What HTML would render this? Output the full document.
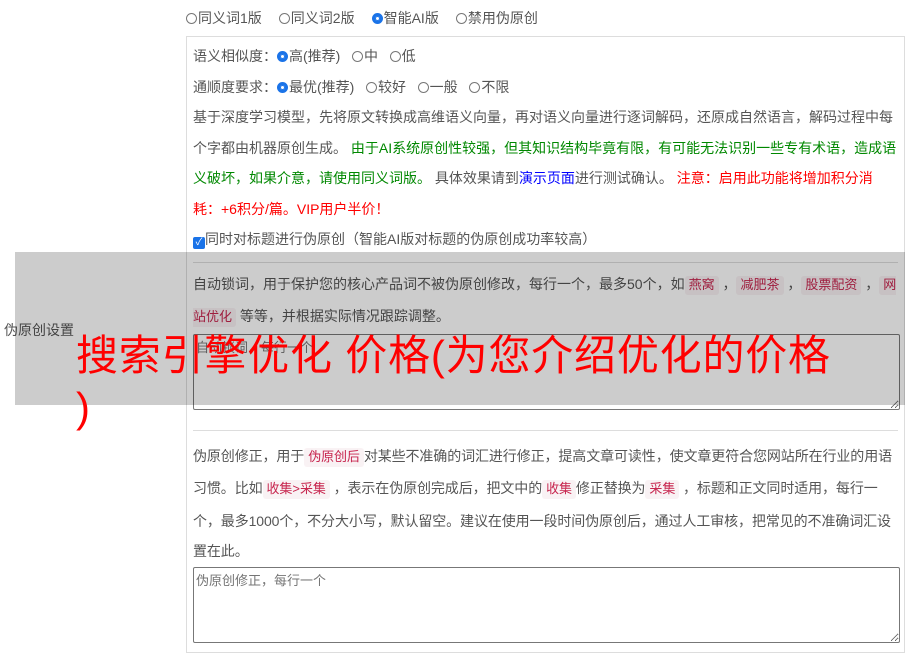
<!DOCTYPE html>
<html><head><meta charset="utf-8"><style>
body{margin:0;width:911px;height:658px;overflow:hidden;background:#fff;font-family:"Liberation Sans","Noto Sans CJK SC",sans-serif;font-size:14px;color:#555;position:relative}
.top{position:absolute;left:186px;top:8px;line-height:20px}
.top span.i{margin-right:17px}
.r{display:inline-block;width:11px;height:11px;border:1px solid #777;border-radius:50%;vertical-align:-1px;margin-right:1px;box-sizing:border-box}
.r.on{border:3px solid #1a73e8;background:#fff;box-shadow:0 0 0 1px #1a73e8 inset}
.box{position:absolute;left:186px;top:36px;width:719px;height:617px;border:1px solid #ddd;box-sizing:border-box;padding:4px 6px 0 6px}
p{margin:0;line-height:30.5px}
.bk{word-break:break-all}
.g{color:#080}.b{color:#00f}.red{color:#f00}
code{font-family:"Liberation Mono","Noto Sans CJK SC",monospace;font-size:13px;color:#c7254e;background:#f9f2f4;padding:2px 4px;border-radius:3px}
hr{border:0;border-top:1px solid #ddd;margin:7px 0 6px}
textarea{display:block;width:707px;height:76px;border:1px solid #777;border-radius:2px;box-sizing:border-box;font-family:inherit;font-size:13px;color:#777;padding:2px;resize:both;margin:0}
.lbl{position:absolute;left:4px;top:320px;color:#555}
.ov{position:absolute;left:15px;top:252px;width:890px;height:153px;background:rgba(0,0,0,.2)}
.t{position:absolute;left:76px;top:330px;width:800px;font-size:42px;letter-spacing:0.8px;line-height:52px;color:#f00}
.cb{display:inline-block;width:12px;height:12px;background:#1a73e8;border-radius:2px;color:#fff;font-size:10px;line-height:12px;text-align:center;vertical-align:-1px}
</style></head><body>
<div class="top"><span class="i"><span class="r"></span>同义词1版</span><span class="i"><span class="r"></span>同义词2版</span><span class="i"><span class="r on"></span>智能AI版</span><span><span class="r"></span>禁用伪原创</span></div>
<div class="box">
<p>语义相似度：<span class="r on"></span>高(推荐) &nbsp; <span class="r"></span>中 &nbsp; <span class="r"></span>低</p>
<p>通顺度要求：<span class="r on"></span>最优(推荐) &nbsp; <span class="r"></span>较好 &nbsp; <span class="r"></span>一般 &nbsp; <span class="r"></span>不限</p>
<p>基于深度学习模型，先将原文转换成高维语义向量，再对语义向量进行逐词解码，还原成自然语言，解码过程中每个字都由机器原创生成。 <span class="g">由于AI系统原创性较强，但其知识结构毕竟有限，有可能无法识别一些专有术语，造成语义破坏，如果介意，请使用同义词版。</span> 具体效果请到<span class="b">演示页面</span>进行测试确认。 <span class="red">注意：启用此功能将增加积分消耗：+6积分/篇。VIP用户半价！</span></p>
<p><span class="cb">✓</span>同时对标题进行伪原创（智能AI版对标题的伪原创成功率较高）</p>
<hr>
<p class="bk">自动锁词，用于保护您的核心产品词不被伪原创修改，每行一个，最多50个，如<code>燕窝</code> ，<code>减肥茶</code> ，<code>股票配资</code> ，<code>网站优化</code> 等等，并根据实际情况跟踪调整。</p>
<textarea placeholder="自动锁词，每行一个"></textarea>
<hr style="margin-top:20px;margin-bottom:10px">
<p style="letter-spacing:-0.1px">伪原创修正，用于<code>伪原创后</code>对某些不准确的词汇进行修正，提高文章可读性，使文章更符合您网站所在行业的用语习惯。比如<code>收集&gt;采集</code> ，表示在伪原创完成后，把文中的<code>收集</code>修正替换为<code>采集</code> ，标题和正文同时适用，每行一个，最多1000个，不分大小写，默认留空。建议在使用一段时间伪原创后，通过人工审核，把常见的不准确词汇设置在此。</p>
<textarea placeholder="伪原创修正，每行一个"></textarea>
</div>
<div class="lbl">伪原创设置</div>
<div class="ov"></div>
<div class="t">搜索引擎优化 价格(为您介绍优化的价格<br>)</div>
</body></html>
